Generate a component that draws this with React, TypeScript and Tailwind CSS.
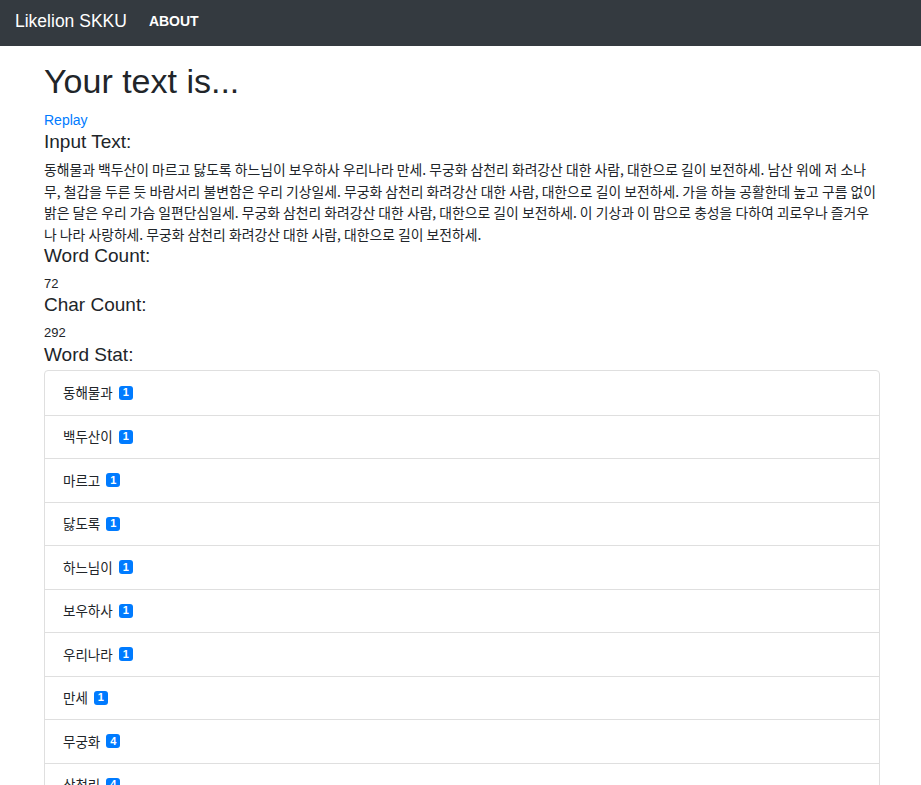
import React from "react";

const latin = { fontFamily: '"Liberation Sans", "Noto Sans CJK KR", sans-serif' };
const kr = { fontFamily: '"Noto Sans CJK KR", "Liberation Sans", sans-serif' };

const words: [string, number][] = [
  ["동해물과", 1],
  ["백두산이", 1],
  ["마르고", 1],
  ["닳도록", 1],
  ["하느님이", 1],
  ["보우하사", 1],
  ["우리나라", 1],
  ["만세", 1],
  ["무궁화", 4],
  ["삼천리", 4],
  ["화려강산", 4],
  ["대한", 4],
  ["사람", 4],
  ["대한으로", 4],
  ["길이", 4],
  ["보전하세", 4],
];

const text =
  "동해물과 백두산이 마르고 닳도록 하느님이 보우하사 우리나라 만세. 무궁화 삼천리 화려강산 대한 사람, 대한으로 길이 보전하세. 남산 위에 저 소나무, 철갑을 두른 듯 바람서리 불변함은 우리 기상일세. 무궁화 삼천리 화려강산 대한 사람, 대한으로 길이 보전하세. 가을 하늘 공활한데 높고 구름 없이 밝은 달은 우리 가슴 일편단심일세. 무궁화 삼천리 화려강산 대한 사람, 대한으로 길이 보전하세. 이 기상과 이 맘으로 충성을 다하여 괴로우나 즐거우나 나라 사랑하세. 무궁화 삼천리 화려강산 대한 사람, 대한으로 길이 보전하세.";

function Heading({ children }: { children: React.ReactNode }) {
  return (
    <h4 className="text-[19px] leading-[21.6px] mb-[7px] text-[#212529]" style={latin}>
      {children}
    </h4>
  );
}

export default function App() {
  return (
    <div className="min-h-screen bg-white text-[#212529]" style={latin}>
      <nav className="h-[46px] bg-[#343a40] flex items-center px-[15px] pb-[4px]">
        <span className="text-[17.5px] text-white mr-[22px]">Likelion SKKU</span>
        <span className="text-[14px] font-bold text-white">ABOUT</span>
      </nav>
      <main className="pl-[44px] pr-[41px] pt-[15px]">
        <h1 className="text-[34px] leading-[40.8px] mb-[8px]">Your text is...</h1>
        <a className="block text-[14px] leading-[21px] text-[#007bff]">Replay</a>
        <Heading>Input Text:</Heading>
        <p className="text-[13.85px] leading-[21.5px] text-[#212529]" style={kr}>
          {text}
        </p>
        <Heading>Word Count:</Heading>
        <div className="text-[13px] leading-[20.5px]">72</div>
        <Heading>Char Count:</Heading>
        <div className="text-[13px] leading-[20.5px]">292</div>
        <h4 className="text-[19px] leading-[21.6px] mb-[5px] text-[#212529]" style={latin}>
          Word Stat:
        </h4>
        <ul className="border border-[#dfdfdf] rounded-[4px]">
          {words.map(([w, c], i) => (
            <li
              key={i}
              className={
                "h-[43.5px] flex items-center px-[18px] text-[13px] " +
                (i > 0 ? "border-t border-[#dfdfdf]" : "")
              }
            >
              <span className="text-[13.5px] leading-[19.5px]" style={kr}>
                {w}
              </span>
              <span
                className="inline-block ml-[6px] rounded-[3px] bg-[#007bff] text-white font-bold text-[11px] leading-none px-[4px] py-[1.5px]"
                style={latin}
              >
                {c}
              </span>
            </li>
          ))}
        </ul>
      </main>
    </div>
  );
}
